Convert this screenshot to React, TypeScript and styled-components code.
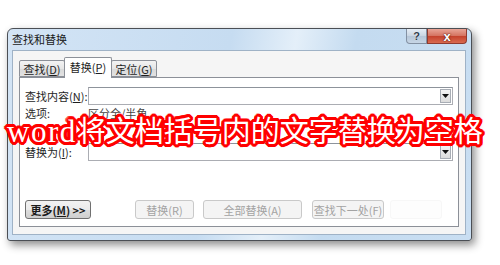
import styled, { createGlobalStyle } from "styled-components";

const GlobalStyle = createGlobalStyle`
  html, body {
    margin: 0;
    padding: 0;
    background: #ffffff;
  }
  body {
    font-family: "Noto Sans CJK SC", "Noto Sans", sans-serif;
    font-size: 11px;
    color: #1e1e1e;
  }
`;

const Page = styled.div`
  position: relative;
  width: 500px;
  height: 265px;
  overflow: hidden;
  padding-top: 28px;
  padding-left: 7px;
  box-sizing: border-box;
`;

const Window = styled.div`
  width: 465px;
  height: 213px;
  box-sizing: border-box;
  border: 1px solid #4b4f55;
  border-radius: 6px 6px 3px 3px;
  background: linear-gradient(100deg, #d3e4f5 0%, #c6dcf1 45%, #e4eff9 58%, #c4dbf0 70%, #c9def2 100%);
  box-shadow: 3px 4px 9px rgba(0, 0, 0, 0.45);
  display: flex;
  flex-direction: column;
`;

const TitleBar = styled.div`
  height: 21px;
  display: flex;
  align-items: flex-start;
  padding-left: 4px;
  padding-right: 4px;
`;

const TitleText = styled.div`
  flex: 1;
  line-height: 21px;
  font-size: 11px;
  color: #1a1a1a;
`;

const CaptionButton = styled.div<{ $variant: "help" | "close" }>`
  height: 15px;
  width: ${(p) => (p.$variant === "help" ? "21px" : "40px")};
  box-sizing: border-box;
  border: 1px solid ${(p) => (p.$variant === "help" ? "#8391a3" : "#8f3b30")};
  border-top: none;
  border-radius: ${(p) => (p.$variant === "help" ? "0 0 0 4px" : "0 0 4px 0")};
  background: ${(p) =>
    p.$variant === "help"
      ? "linear-gradient(#e6edf5, #c9d5e3 50%, #b6c6d8 51%, #c7d6e6)"
      : "linear-gradient(#e9a597, #d4715f 50%, #c4412c 51%, #d96a50)"};
  display: flex;
  align-items: center;
  justify-content: center;
  font-family: "Liberation Sans", sans-serif;
  font-weight: bold;
  font-size: ${(p) => (p.$variant === "help" ? "11px" : "13px")};
  line-height: 1;
  color: ${(p) => (p.$variant === "help" ? "#2f3b4a" : "#ffffff")};
  text-shadow: ${(p) =>
    p.$variant === "help" ? "0 0 1px #ffffff" : "0 0 2px #5a1a10, 0 0 1px #5a1a10"};
`;

const Client = styled.div`
  margin: 0 5px 5px 4px;
  flex: 1;
  box-sizing: border-box;
  border: 1px solid #9fb2c6;
  background: #f5f5f5;
  padding: 6px 6px 0 6px;
  display: flex;
  flex-direction: column;
`;

const TabRow = styled.div`
  display: flex;
  align-items: flex-end;
  height: 20px;
  position: relative;
  z-index: 1;
`;

const Tab = styled.div<{ $active?: boolean }>`
  box-sizing: border-box;
  height: ${(p) => (p.$active ? "21px" : "17px")};
  width: ${(p) => (p.$active ? "48px" : "46px")};
  margin-bottom: ${(p) => (p.$active ? "-1px" : "0")};
  border: 1px solid #8c9098;
  border-bottom: ${(p) => (p.$active ? "none" : "1px solid #8c9098")};
  border-radius: 2px 2px 0 0;
  background: ${(p) =>
    p.$active ? "#ffffff" : "linear-gradient(#f3f3f3, #e6e6e6 50%, #d9d9d9 51%, #e2e2e2)"};
  display: flex;
  align-items: center;
  justify-content: center;
  padding-bottom: ${(p) => (p.$active ? "2px" : "0")};
  & + & {
    margin-left: -1px;
  }
`;

const Key = styled.span`
  text-decoration: underline;
  text-underline-offset: 1px;
`;

const Panel = styled.div`
  box-sizing: border-box;
  height: 150px;
  border: 1px solid #8c9098;
  background: #ffffff;
  padding: 9px 5px 0 5px;
  display: flex;
  flex-direction: column;
`;

const FieldRow = styled.div`
  display: flex;
  align-items: center;
  height: 18px;
`;

const Label = styled.div`
  width: 63px;
  flex-shrink: 0;
  white-space: nowrap;
`;

const ComboBox = styled.div`
  width: 365px;
  height: 18px;
  box-sizing: border-box;
  border: 1px solid #abadb3;
  border-top-color: #8d939b;
  background: #ffffff;
  display: flex;
  justify-content: flex-end;
  align-items: center;
  padding-right: 1px;
`;

const DropButton = styled.div`
  width: 11px;
  height: 14px;
  box-sizing: border-box;
  border: 1px solid #a8adb5;
  background: linear-gradient(#f4f4f4, #dcdcdc);
  display: flex;
  align-items: center;
  justify-content: center;
`;

const OptionsRow = styled.div`
  display: flex;
  align-items: center;
  height: 14px;
  margin-top: 1px;
  color: #2a2a2a;
`;

const OptionsValue = styled.div`
  color: #444;
`;

const Spacer = styled.div<{ $h: number }>`
  height: ${(p) => p.$h}px;
  flex-shrink: 0;
`;

const ButtonRow = styled.div`
  display: flex;
  align-items: center;
`;

const DialogButton = styled.div<{ $w: number; $disabled?: boolean; $gap?: number; $ghost?: boolean }>`
  width: ${(p) => p.$w}px;
  height: 19px;
  box-sizing: border-box;
  margin-left: ${(p) => p.$gap ?? 0}px;
  border: 1px solid ${(p) => (p.$ghost ? "#f7f7f7" : p.$disabled ? "#c9c9c9" : "#707070")};
  border-radius: 3px;
  background: ${(p) =>
    p.$ghost
      ? "#fdfdfd"
      : p.$disabled
      ? "#f4f4f4"
      : "linear-gradient(#f2f2f2, #ebebeb 50%, #dddddd 51%, #cfcfcf)"};
  color: ${(p) => (p.$disabled ? "#a3a3a3" : "#1a1a1a")};
  font-weight: ${(p) => (p.$disabled ? "normal" : "bold")};
  display: flex;
  align-items: center;
  justify-content: center;
  white-space: nowrap;
`;

const Overlay = styled.div`
  position: absolute;
  left: 7px;
  top: 113px;
  font-size: 29px;
  line-height: 32px;
  color: #ffffff;
  white-space: nowrap;
  font-family: "Noto Sans CJK SC", sans-serif;
  text-shadow: 3px 0 0 #f00, -3px 0 0 #f00, 0 3px 0 #f00, 0 -3px 0 #f00,
    2px 2px 0 #f00, -2px 2px 0 #f00, 2px -2px 0 #f00, -2px -2px 0 #f00,
    3px 1px 0 #f00, -3px 1px 0 #f00, 3px -1px 0 #f00, -3px -1px 0 #f00,
    1px 3px 0 #f00, -1px 3px 0 #f00, 1px -3px 0 #f00, -1px -3px 0 #f00,
    0 0 3px #e00;
`;

const LatinWord = styled.span`
  font-family: "Liberation Serif", "DejaVu Serif", serif;
  font-size: 31px;
  letter-spacing: 1.5px;
`;

const Arrow = () => (
  <svg width="7" height="4" viewBox="0 0 7 4">
    <path d="M0 0 H7 L3.5 4 Z" fill="#111" />
  </svg>
);

export default function App() {
  return (
    <Page>
      <GlobalStyle />
      <Window>
        <TitleBar>
          <TitleText>查找和替换</TitleText>
          <CaptionButton $variant="help">?</CaptionButton>
          <CaptionButton $variant="close">x</CaptionButton>
        </TitleBar>
        <Client>
          <TabRow>
            <Tab>
              查找(<Key>D</Key>)
            </Tab>
            <Tab $active>
              替换(<Key>P</Key>)
            </Tab>
            <Tab>
              定位(<Key>G</Key>)
            </Tab>
          </TabRow>
          <Panel>
            <FieldRow>
              <Label>
                查找内容(<Key>N</Key>):
              </Label>
              <ComboBox>
                <DropButton>
                  <Arrow />
                </DropButton>
              </ComboBox>
            </FieldRow>
            <OptionsRow>
              <Label>选项:</Label>
              <OptionsValue>区分全/半角</OptionsValue>
            </OptionsRow>
            <Spacer $h={23} />
            <FieldRow>
              <Label>
                替换为(<Key>I</Key>):
              </Label>
              <ComboBox>
                <DropButton>
                  <Arrow />
                </DropButton>
              </ComboBox>
            </FieldRow>
            <Spacer $h={39} />
            <ButtonRow>
              <DialogButton $w={66}>
                更多(<Key>M</Key>)&nbsp;&gt;&gt;
              </DialogButton>
              <DialogButton $w={59} $gap={44} $disabled>
                替换(R)
              </DialogButton>
              <DialogButton $w={99} $gap={9} $disabled>
                全部替换(A)
              </DialogButton>
              <DialogButton $w={72} $gap={10} $disabled>
                查找下一处(F)
              </DialogButton>
              <DialogButton $w={52} $gap={6} $ghost $disabled />
            </ButtonRow>
          </Panel>
        </Client>
      </Window>
      <Overlay>
        <LatinWord>word</LatinWord>将文档括号内的文字替换为空格
      </Overlay>
    </Page>
  );
}
